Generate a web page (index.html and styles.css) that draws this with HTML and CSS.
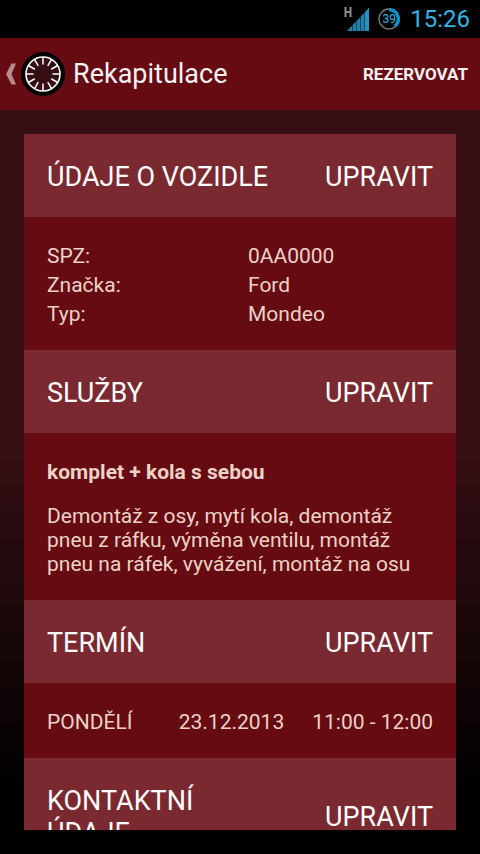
FILE: index.html
```html
<!DOCTYPE html>
<html lang="cs">
<head>
<meta charset="utf-8">
<meta name="viewport" content="width=device-width, initial-scale=1">
<title>Rekapitulace</title>
<link rel="stylesheet" href="styles.css">
</head>
<body>
<div class="status">
  <svg class="signal" viewBox="0 0 26 26" aria-hidden="true">
    <path d="M1.500 1v10M6.500 1v10M1.500 6h5" fill="none" stroke="#8a8a8a" stroke-width="2"/>
    <path d="M3 25L25 2V25Z" fill="#2482aa"/>
    <path d="M8.500 19v6M12.500 15v10M16.500 11v14M20.500 7v18" stroke="#0b465f" stroke-width="1"/>
    <path d="M21 6.200L25 2V25H21Z" fill="#2592bf"/>
  </svg>
  <div class="battery">
    <svg viewBox="0 0 22 22" aria-hidden="true">
      <circle cx="11" cy="11" r="10" fill="none" stroke="#777" stroke-width="1.400"/>
      <path d="M11 1.800A9.200 9.200 0 0 1 16.800 18.200" fill="none" stroke="#0a94cc" stroke-width="3.400"/>
    </svg>
    <span class="battery-level">39</span>
  </div>
  <time class="clock">15:26</time>
</div>
<header class="bar">
  <a class="home" href="#">
    <svg class="back" viewBox="0 0 10 22" aria-hidden="true">
      <path d="M5.500 .5H10L5.500 11L10 21.500H5.500L0 11Z" fill="#b98a8d"/>
    </svg>
    <svg class="logo" viewBox="0 0 44 44" aria-hidden="true">
      <circle cx="22" cy="22" r="22" fill="#000"/>
      <circle cx="22" cy="22" r="17" fill="#350f13" stroke="#fff" stroke-width="1.600"/>
      <g stroke="#fff" stroke-width="1.500">
        <path d="M22 5v7.500M22 31.500v7.500M5 22h7.500M31.500 22h7.500"/>
        <path d="M22 5v7.500M22 31.500v7.500M5 22h7.500M31.500 22h7.500" transform="rotate(30 22 22)"/>
        <path d="M22 5v7.500M22 31.500v7.500M5 22h7.500M31.500 22h7.500" transform="rotate(60 22 22)"/>
      </g>
    </svg>
    <h1 class="title">Rekapitulace</h1>
  </a>
  <button class="reserve" type="button">REZERVOVAT</button>
</header>
<main class="content">
  <div class="summary">
    <section>
      <div class="head"><h2>ÚDAJE O VOZIDLE</h2><button type="button">UPRAVIT</button></div>
      <dl class="body vehicle">
        <dt>SPZ:</dt><dd>0AA0000</dd>
        <dt>Značka:</dt><dd>Ford</dd>
        <dt>Typ:</dt><dd>Mondeo</dd>
      </dl>
    </section>
    <section>
      <div class="head"><h2>SLUŽBY</h2><button type="button">UPRAVIT</button></div>
      <div class="body services">
        <h3>komplet + kola s sebou</h3>
        <p>Demontáž z osy, mytí kola, demontáž pneu z ráfku, výměna ventilu, montáž pneu na ráfek, vyvážení, montáž na osu</p>
      </div>
    </section>
    <section>
      <div class="head"><h2>TERMÍN</h2><button type="button">UPRAVIT</button></div>
      <div class="body term"><span class="day">PONDĚLÍ</span><span>23.12.2013</span><span>11:00 - 12:00</span></div>
    </section>
    <section>
      <div class="head"><h2>KONTAKTNÍ ÚDAJE</h2><button type="button">UPRAVIT</button></div>
    </section>
  </div>
</main>
</body>
</html>
```
FILE: styles.css
```css
* { box-sizing: border-box; margin: 0; padding: 0; }
html { height: 100%; }
body {
  height: 100%;
  display: flex;
  flex-direction: column;
  overflow: hidden;
  background: #000;
  color: #ecd2c7;
  font-family: Roboto, "Liberation Sans", sans-serif;
  font-size: 21px;
  line-height: 29px;
}
button, a { font: inherit; color: inherit; text-decoration: none; }
button { background: none; border: 0; cursor: pointer; }

.status {
  flex: none;
  height: 38px;
  display: flex;
  align-items: center;
  justify-content: flex-end;
  padding-right: 10px;
}
.signal { width: 26px; height: 26px; margin-right: 8px; }
.battery { position: relative; width: 22px; height: 22px; margin-right: 10px; }
.battery svg { display: block; }
.battery-level {
  position: absolute;
  inset: 0;
  text-align: center;
  font-size: 12px;
  line-height: 22px;
  color: #33b5e5;
}
.clock { font-size: 24px; line-height: 30px; color: #33b5e5; }

.bar {
  flex: none;
  height: 72px;
  display: flex;
  align-items: center;
  justify-content: space-between;
  padding: 0 12px 0 6px;
  background: #670b12;
  color: #f2f2f2;
}
.home { display: flex; align-items: center; }
.back { width: 10px; height: 22px; margin-right: 5px; }
.logo { width: 44px; height: 44px; margin-right: 8px; }
.title { font-size: 27px; line-height: 32px; font-weight: 400; }
.reserve { font-size: 17px; font-weight: 700; }

.content {
  flex: 1;
  min-height: 0;
  display: flex;
  padding: 24px;
  background: linear-gradient(#350f13 0%, #350f13 45%, #000 92%);
}
.summary { flex: 1; overflow: hidden; background: #670b12; }
.head {
  display: flex;
  align-items: center;
  justify-content: space-between;
  gap: 48px;
  padding: 27px 23px 24px;
  background: #7b2930;
  color: #fff;
  font-size: 27px;
  line-height: 32px;
}
.head h2 { font: inherit; }
.body { padding: 25px 23px 21px; }
.services { padding-bottom: 24px; }
.vehicle { display: grid; grid-template-columns: 1fr 1fr; column-gap: 16px; }
h3 { font-size: 21px; font-weight: 700; margin-bottom: 17px; }
.body p { line-height: 24px; }
.term { display: flex; gap: 28px; }
.day { flex: 1; }
```
